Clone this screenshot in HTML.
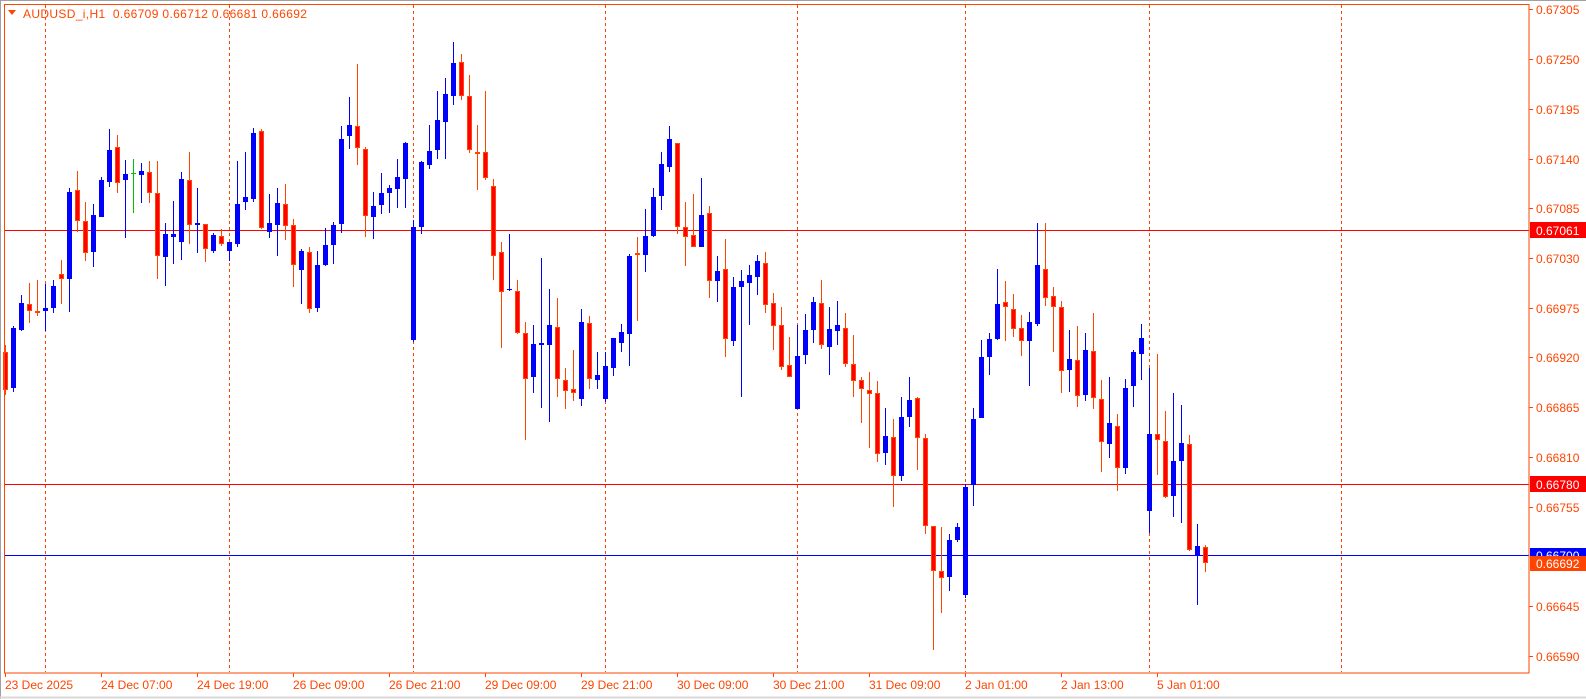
<!DOCTYPE html>
<html><head><meta charset="utf-8"><style>
html,body{margin:0;padding:0;background:#fff;width:1586px;height:699px;overflow:hidden}
svg{display:block}
text{font-family:"Liberation Sans",sans-serif;font-size:12px}
</style></head><body>
<svg id="s" width="1586" height="699" xmlns="http://www.w3.org/2000/svg">
<rect x="0" y="0" width="1586" height="699" fill="#fff"/>
<line x1="0.5" y1="0" x2="0.5" y2="699" stroke="#a0a0a0"/>
<line x1="0" y1="0.5" x2="1586" y2="0.5" stroke="#a0a0a0"/>
<line x1="0" y1="697.5" x2="1586" y2="697.5" stroke="#d8d8d8" stroke-width="2"/>
<g id="grid" stroke="#ff4500" stroke-dasharray="3,3"></g>
<line x1="4" y1="230.5" x2="1529" y2="230.5" stroke="#ff0000"/>
<line x1="4" y1="484.5" x2="1529" y2="484.5" stroke="#ff0000"/>
<line x1="4" y1="555.5" x2="1529" y2="555.5" stroke="#0000ff"/>
<g id="c"></g>
<rect x="4.5" y="4.5" width="1524.5" height="668.5" fill="none" stroke="#ff4500"/>
<g id="ax" fill="#ff4500"></g>
<polygon points="8,10 16,10 12,15" fill="#ff4500"/>
<text x="23" y="18" fill="#ff4500" style="letter-spacing:0.35px">AUDUSD_i,H1&#160;&#160;0.66709 0.66712 0.66681 0.66692</text>
<rect x="1530" y="222" width="56" height="16" fill="#ff0000"/>
<text x="1536" y="235" fill="#fff">0.67061</text>
<rect x="1530" y="476" width="56" height="16" fill="#ff0000"/>
<text x="1536" y="489" fill="#fff">0.66780</text>
<rect x="1530" y="548" width="56" height="9" fill="#0000ff"/>
<text x="1536" y="560" fill="#fff">0.66700</text>
<rect x="1530" y="556" width="56" height="15" fill="#ff4500"/>
<text x="1536" y="568" fill="#fff">0.66692</text>
</svg>
<script>
var NS="http://www.w3.org/2000/svg";
function el(p,t,a,txt){var e=document.createElementNS(NS,t);for(var k in a)e.setAttribute(k,a[k]);if(txt)e.textContent=txt;p.appendChild(e);return e;}
var g=document.getElementById('grid');
[45,229,413,605,797,965,1149,1341].forEach(function(x){el(g,'line',{x1:x+.5,y1:5,x2:x+.5,y2:672});});
var ax=document.getElementById('ax');
var ps=["0.67305","0.67250","0.67195","0.67140","0.67085","0.67030","0.66975","0.66920","0.66865","0.66810","0.66755","0.66645","0.66590"];
ps.forEach(function(p){var y=484-(parseFloat(p)-0.66780)*90400;
el(ax,'rect',{x:1529,y:Math.round(y),width:4,height:1});
el(ax,'text',{x:1536,y:Math.round(y)+5},p);});
var tl=[[5,"23 Dec 2025"],[101,"24 Dec 07:00"],[197,"24 Dec 19:00"],[293,"26 Dec 09:00"],[389,"26 Dec 21:00"],[485,"29 Dec 09:00"],[581,"29 Dec 21:00"],[677,"30 Dec 09:00"],[773,"30 Dec 21:00"],[869,"31 Dec 09:00"],[965,"2 Jan 01:00"],[1061,"2 Jan 13:00"],[1157,"5 Jan 01:00"]];
tl.forEach(function(t){el(ax,'rect',{x:t[0],y:673,width:1,height:4});el(ax,'text',{x:t[0],y:689},t[1]);});
var D="r345,352,390,395 b326,328,388,392 b295,303,330,331 r283,304,311,323 r280,311,313,316 b284,308,311,331 b280,286,308,313 r260,274,279,304 b188,192,279,312 r171,190,221,232 r202,221,253,261 b204,215,252,267 b177,180,217,217 b129,150,182,187 r135,147,183,193 b160,174,180,238 g159,173,174,213 b163,171,175,203 r161,172,193,203 r161,193,256,279 b223,234,257,286 b201,234,237,264 b172,179,242,260 r152,180,225,244 b188,223,225,253 r224,224,249,262 b233,235,251,253 r229,236,244,246 b242,242,251,261 b161,204,244,247 b152,197,202,210 b128,133,199,202 r129,131,228,229 b194,223,232,238 b188,203,225,256 r184,204,226,240 r219,225,265,287 b249,251,270,304 r247,252,309,313 b251,265,308,312 b228,245,265,266 b222,225,245,264 b126,139,224,233 b97,125,136,149 r64,126,148,165 r147,149,216,237 b192,206,217,239 b173,193,205,214 b185,188,193,213 b159,177,189,208 b142,143,179,208 b220,227,340,342 b161,162,227,234 b125,151,165,169 b91,120,150,159 b78,94,122,159 b42,63,96,105 r54,62,96,100 r75,96,150,153 r125,152,154,190 r91,152,178,180 r179,186,256,280 r242,252,292,348 b234,289,290,291 r280,291,333,334 r322,333,379,440 b325,344,377,393 b258,343,345,408 b289,325,345,422 r298,327,379,397 r368,380,391,409 r350,389,393,401 b309,322,399,406 r316,323,379,389 b352,375,380,389 b352,366,399,402 b338,338,368,376 b324,332,343,352 b254,256,334,366 r237,253,255,321 b209,236,255,272 b188,197,236,237 b152,164,196,210 b126,139,167,172 r143,143,227,234 r202,227,237,266 r194,235,247,247 b178,215,247,247 r206,213,281,298 b256,271,281,302 r239,269,339,357 b277,287,341,346 b270,281,287,397 b265,275,283,325 b255,261,277,295 r252,263,305,313 r293,303,326,350 r307,325,367,370 r337,365,377,377 b325,356,409,409 b314,330,355,364 b297,302,330,343 r280,303,345,349 b307,329,347,375 b301,325,331,345 r313,328,364,367 r335,364,381,397 r377,380,389,423 r372,390,394,448 r381,393,454,462 b408,436,453,465 r419,437,476,507 b397,417,476,481 b377,400,417,427 r397,398,438,470 r434,438,526,534 r526,526,571,650 r527,571,578,613 b534,540,577,591 b523,527,540,542 b484,487,595,598 b408,419,485,506 b340,357,418,418 b333,339,357,375 b269,304,339,340 r281,302,307,341 r294,309,329,337 r315,328,341,356 b312,322,341,386 b223,265,324,326 r223,269,298,306 r287,296,307,352 r301,307,371,393 b330,359,370,392 r326,360,396,407 b333,350,395,401 r313,351,398,409 r380,399,442,472 b377,423,444,458 r414,426,468,491 b379,388,468,474 b350,352,386,407 b324,338,354,380 b368,434,511,533 r354,434,440,475 r411,441,497,498 b393,461,496,517 b405,443,461,523 r435,444,550,551 b524,546,555,605 r545,547,563,572";
var c=document.getElementById('c');
D.split(' ').forEach(function(s,k){
var col=s[0],v=s.slice(1).split(',').map(Number);
var x=5+8*k;
var wc=col=='b'?'#0000ff':(col=='g'?'#00c000':'#ff4500');
el(c,'rect',{x:x,y:v[0],width:1,height:Math.max(1,v[3]-v[0]),fill:wc});
var h=Math.max(1,v[2]-v[1]);
if(col=='b')el(c,'rect',{x:x-2,y:v[1],width:5,height:h,fill:'#0000ff'});
else if(col=='g')el(c,'rect',{x:x-2,y:v[1],width:5,height:1,fill:'#00c000'});
else{ if(h<=2)el(c,'rect',{x:x-2,y:v[1],width:5,height:2,fill:'#ff4500'});
else el(c,'rect',{x:x-1.5,y:v[1]+.5,width:4,height:h-1,fill:'#ff0000',stroke:'#ff4500','stroke-width':1});}
});
</script>
</body></html>
